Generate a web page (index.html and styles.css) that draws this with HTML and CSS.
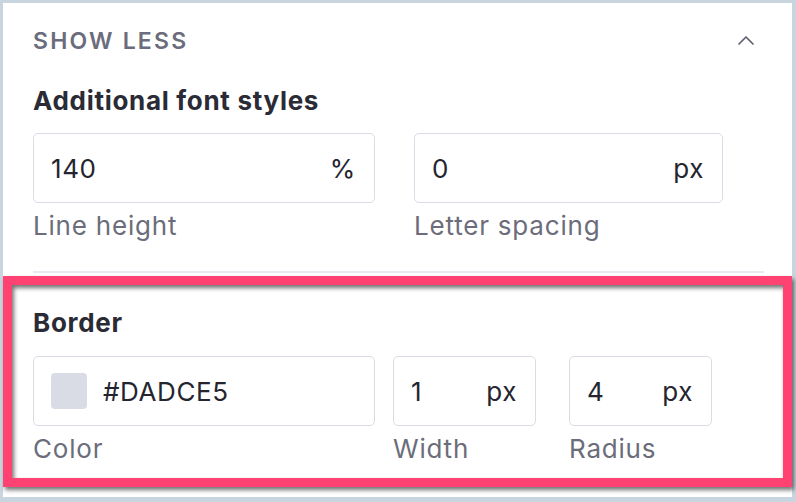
FILE: index.html
```html
<!DOCTYPE html>
<html>
<head>
<meta charset="utf-8">
<link rel="stylesheet" href="styles.css">
</head>
<body>
<div class="panel">
  <div class="header">
    <span class="header-title">SHOW LESS</span>
    <svg class="chevron" width="24" height="24" viewBox="0 0 24 24"><path d="M5 15l7-7 7 7" fill="none" stroke="#5f6170" stroke-width="1.7" stroke-linecap="round" stroke-linejoin="round"/></svg>
  </div>

  <section class="group">
    <h3 class="group-title">Additional font styles</h3>
    <div class="row">
      <div class="field f-wide">
        <div class="input"><span class="value">140</span><span class="unit">%</span></div>
        <div class="label">Line height</div>
      </div>
      <div class="field f-mid">
        <div class="input"><span class="value">0</span><span class="unit">px</span></div>
        <div class="label">Letter spacing</div>
      </div>
    </div>
  </section>

  <hr class="divider">

  <section class="group group-border">
    <h3 class="group-title">Border</h3>
    <div class="row">
      <div class="field f-wide">
        <div class="input input-color"><span class="swatch"></span><span class="value">#DADCE5</span></div>
        <div class="label">Color</div>
      </div>
      <div class="field f-small f-width">
        <div class="input"><span class="value">1</span><span class="unit">px</span></div>
        <div class="label">Width</div>
      </div>
      <div class="field f-small f-radius">
        <div class="input"><span class="value">4</span><span class="unit">px</span></div>
        <div class="label">Radius</div>
      </div>
    </div>
    <div class="highlight"></div>
  </section>
</div>
</body>
</html>
```

FILE: styles.css
```css
* { box-sizing: border-box; }
html, body {
  margin: 0;
  height: 100%;
  background: #c9d5de;
  font-family: Inter, "Noto Sans", sans-serif;
  overflow: hidden;
}
.panel {
  margin: 3px 4px 0 3px;
  height: 494px;
  background: #ffffff;
  padding: 0 28px 0 30px;
  display: flex;
  flex-direction: column;
}
.header {
  height: 75px;
  display: flex;
  align-items: center;
  justify-content: space-between;
}
.header-title {
  font-size: 23px;
  line-height: 22px;
  font-weight: 600;
  letter-spacing: 2.2px;
  color: #6b6c7c;
}
.chevron { margin-right: 6px; }
.group { position: relative; }
.group-title {
  margin: 10px 0 0;
  font-size: 26px;
  line-height: 26px;
  font-weight: 700;
  letter-spacing: 0.7px;
  color: #2a2b35;
}
.row {
  display: flex;
  margin-top: 19px;
}
.f-wide { width: 342px; }
.f-mid { width: 309px; margin-left: 39px; }
.f-small { width: 143px; }
.f-width { margin-left: 18px; }
.f-radius { margin-left: 33px; }
.input {
  height: 70px;
  border: 1.5px solid #dadce5;
  border-radius: 5px;
  display: flex;
  align-items: center;
  justify-content: space-between;
  padding: 0 18px 0 17px;
  font-size: 26px;
  letter-spacing: 0.6px;
  color: #24252e;
}
.input-color { justify-content: flex-start; }
.swatch {
  width: 36px;
  height: 36px;
  border-radius: 4px;
  background: #dadce5;
  margin-right: 16px;
}
.label {
  margin-top: 10px;
  font-size: 26px;
  line-height: 26px;
  letter-spacing: 0.8px;
  color: #6b6d7b;
}
.divider {
  margin: 32px 0 0;
  border: 0;
  height: 2px;
  background: #e7ebef;
}
.group-border .group-title { margin-top: 37px; }
.group-border .row { margin-top: 20px; }
.highlight {
  position: absolute;
  left: -30px;
  right: -28px;
  top: 3px;
  bottom: -25px;
  border: 9px solid #ff4272;
  filter: drop-shadow(2px 3px 2px rgba(0,0,0,0.55));
  pointer-events: none;
}
```
